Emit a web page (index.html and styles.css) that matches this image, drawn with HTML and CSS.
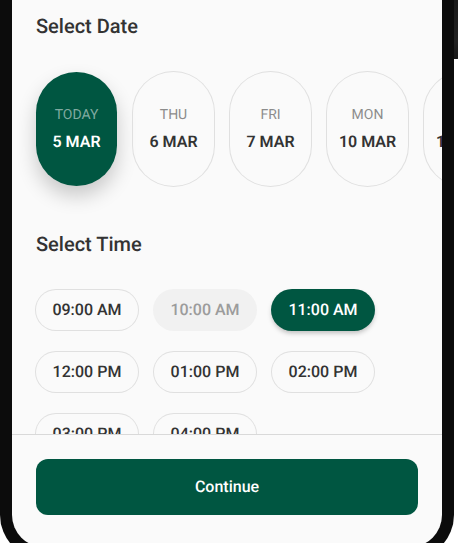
FILE: index.html
```html
<!DOCTYPE html>
<html lang="en">
<head>
<meta charset="utf-8">
<meta name="viewport" content="width=device-width, initial-scale=1">
<title>Book an appointment</title>
<link rel="stylesheet" href="styles.css">
</head>
<body>
<div class="phone">
  <span class="side-key"></span>
  <div class="screen">
    <main class="content">
      <section>
        <h2 class="heading">Select Date</h2>
        <div class="dates">
          <button type="button" class="date selected" aria-pressed="true"><span class="day">TODAY</span><span class="number">5 MAR</span></button>
          <button type="button" class="date"><span class="day">THU</span><span class="number">6 MAR</span></button>
          <button type="button" class="date"><span class="day">FRI</span><span class="number">7 MAR</span></button>
          <button type="button" class="date"><span class="day">MON</span><span class="number">10 MAR</span></button>
          <button type="button" class="date"><span class="day">TUE</span><span class="number">11 MAR</span></button>
        </div>
      </section>
      <section>
        <h2 class="heading">Select Time</h2>
        <div class="times">
          <button type="button" class="time">09:00 AM</button>
          <button type="button" class="time" disabled>10:00 AM</button>
          <button type="button" class="time selected" aria-pressed="true">11:00 AM</button>
          <button type="button" class="time">12:00 PM</button>
          <button type="button" class="time">01:00 PM</button>
          <button type="button" class="time">02:00 PM</button>
          <button type="button" class="time">03:00 PM</button>
          <button type="button" class="time">04:00 PM</button>
        </div>
      </section>
    </main>
    <footer class="footer">
      <button type="button" class="continue">Continue</button>
    </footer>
  </div>
</div>
</body>
</html>
```
FILE: styles.css
```css
* {
  box-sizing: border-box;
}

html,
body {
  height: 100%;
}

body {
  margin: 0;
  overflow: hidden;
  background: #fff;
  color: #333;
  font-family: Roboto, "Liberation Sans", sans-serif;
  text-rendering: geometricPrecision;
}

button {
  padding: 0;
  border: 0;
  background: transparent;
  color: inherit;
  font: inherit;
  text-rendering: inherit;
}

.phone {
  position: relative;
  height: calc(100% + 16px);
  margin-right: 4px;
  padding: 0 12px 12px;
  border-radius: 0 0 44px 44px;
  background: #0c0c0c;
}

.side-key {
  position: absolute;
  top: 0;
  left: 100%;
  width: 5px;
  height: 59px;
  border-bottom-right-radius: 2px;
  background: linear-gradient(#1a1a1a, #222 70%, #181818);
}

.screen {
  display: flex;
  flex-direction: column;
  height: 100%;
  overflow: hidden;
  border-radius: 0 0 32px 32px;
  background: #fafafa;
}

.content {
  flex: 1;
  min-height: 0;
  overflow: hidden;
  padding-top: 14px;
}

.heading {
  margin: 0 24px;
  font-size: 20px;
  font-weight: 500;
  line-height: 24px;
}

.dates {
  display: flex;
  gap: 16px;
  overflow: hidden;
  padding: 34px 0 46px 24px;
}

.date {
  display: flex;
  flex: none;
  flex-direction: column;
  align-items: center;
  justify-content: center;
  gap: 4px;
  width: 81px;
  height: 114px;
  border-radius: 41px;
  box-shadow: 0 0 0 1px #e0e0e0;
}

.day {
  color: #8c8c8c;
  font-size: 14px;
  line-height: 22px;
}

.number {
  font-size: 16px;
  font-weight: 600;
  line-height: 24px;
}

.date.selected {
  background: #005641;
  box-shadow: 0 10px 20px rgba(0, 0, 0, 0.2);
  color: #fff;
}

.date.selected .day {
  color: #80aaa0;
}

.times {
  display: flex;
  flex-wrap: wrap;
  gap: 22px 16px;
  padding: 34px 24px 24px;
}

.time {
  width: 102px;
  height: 40px;
  border-radius: 20px;
  box-shadow: 0 0 0 1px #e0e0e0;
  font-size: 16px;
  font-weight: 500;
  line-height: 24px;
}

.time:disabled {
  background: #f1f1f1;
  box-shadow: 0 0 0 1px #f1f1f1;
  color: #9c9c9c;
}

.time.selected {
  background: #005641;
  box-shadow: 0 0 0 1px #005641, 0 3px 5px rgba(0, 0, 0, 0.25);
  color: #fff;
}

.footer {
  padding: 24px 24px 32px;
  border-top: 1px solid #d9d9d9;
}

.continue {
  display: block;
  width: 100%;
  height: 56px;
  border-radius: 12px;
  background: #005641;
  color: #fff;
  font-size: 16px;
  font-weight: 500;
  line-height: 24px;
}
```
